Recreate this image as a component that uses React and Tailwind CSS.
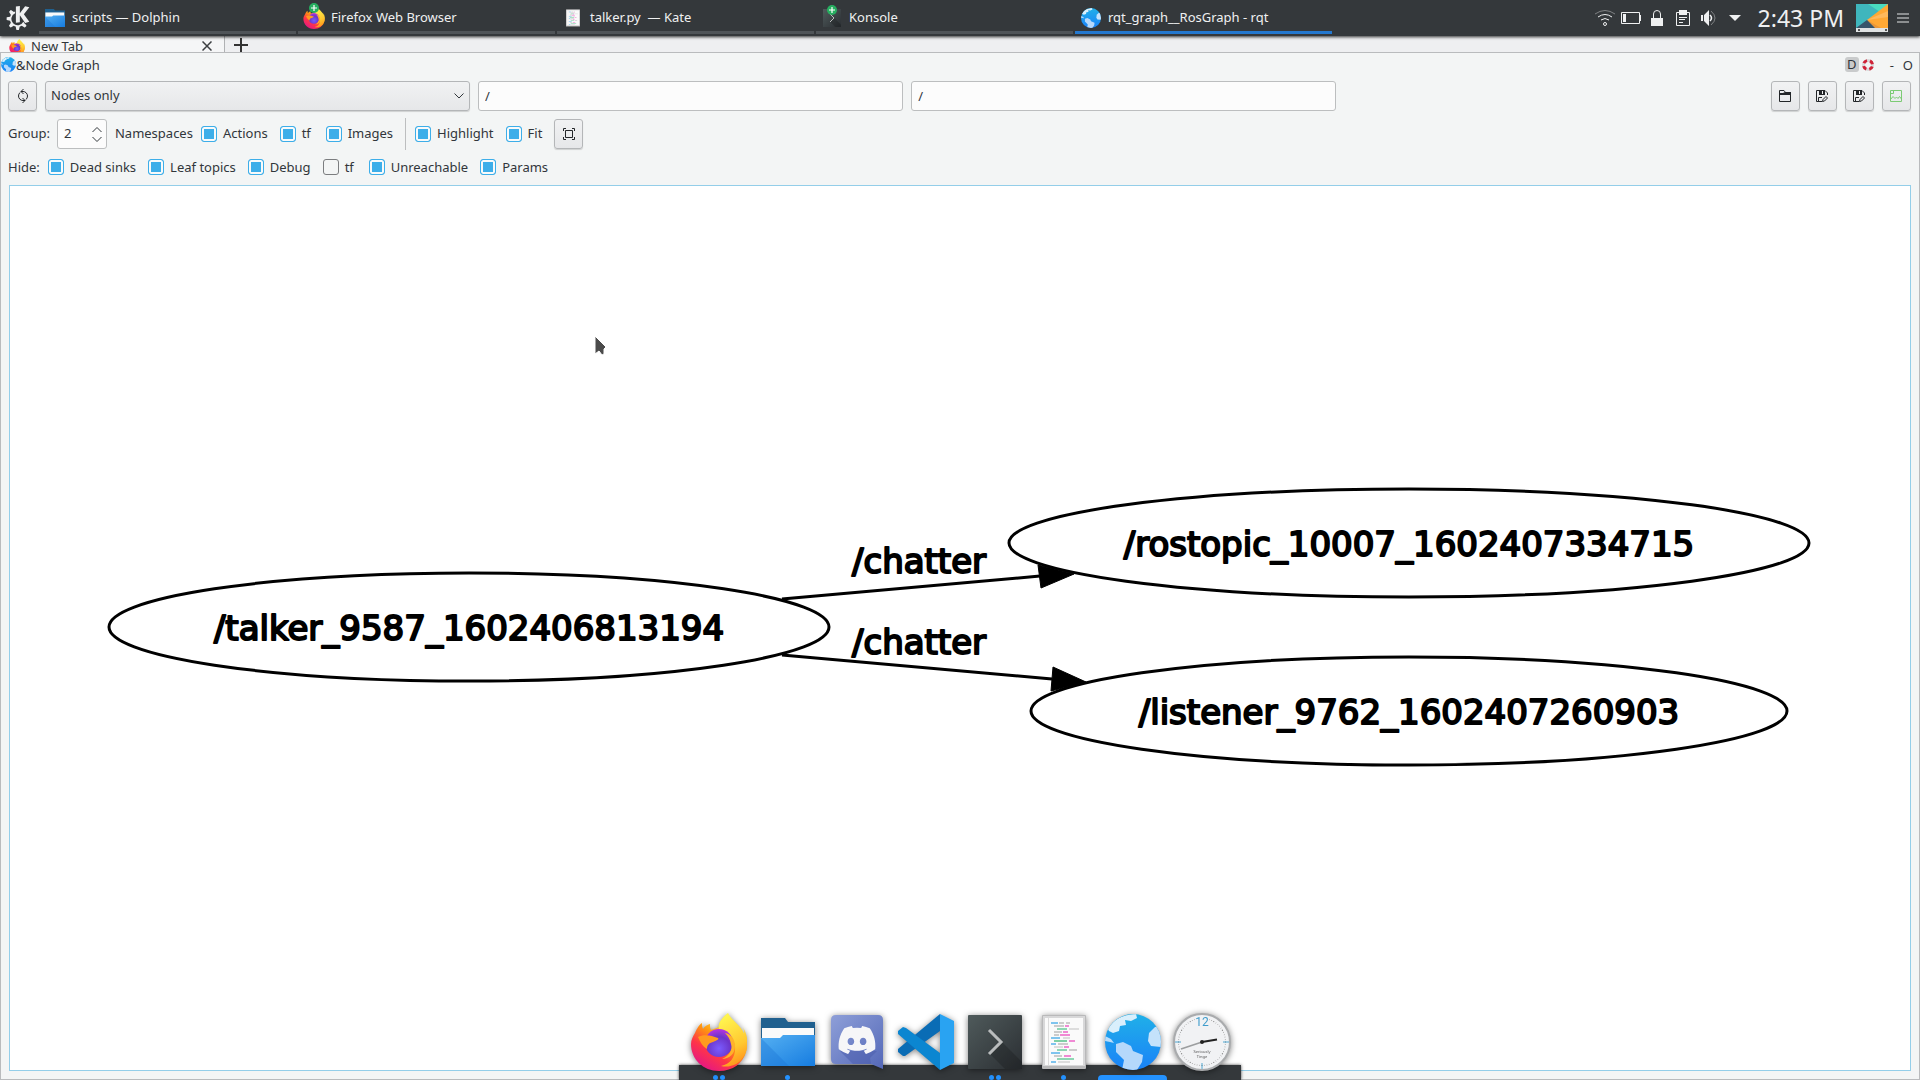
import React, { useId, useState } from "react";
import { SiKde } from "react-icons/si";
import { FaDiscord } from "react-icons/fa";

function Firefox({ className }) {
  const id = useId();
  return (
    <svg viewBox="0 0 56 58" className={className} aria-hidden="true">
      <defs>
        <linearGradient id={id + "a"} x1="0.85" y1="0.1" x2="0.2" y2="0.95">
          <stop offset="0" stopColor="#fff44f" />
          <stop offset="0.35" stopColor="#ff980e" />
          <stop offset="0.65" stopColor="#ff3647" />
          <stop offset="1" stopColor="#e31587" />
        </linearGradient>
        <linearGradient id={id + "b"} x1="0.5" y1="0" x2="0.8" y2="1">
          <stop offset="0" stopColor="#fff44f" />
          <stop offset="0.6" stopColor="#ffc830" />
          <stop offset="1" stopColor="#ff8a16" />
        </linearGradient>
        <radialGradient id={id + "c"} cx="0.5" cy="0.7" r="0.7">
          <stop offset="0" stopColor="#7a5cff" />
          <stop offset="0.6" stopColor="#6b35c9" />
          <stop offset="1" stopColor="#b833e1" />
        </radialGradient>
      </defs>
      <path fill={`url(#${id}a)`} d="M4 20C6 15 9 11 11 10C11 12 11 14 12 16C14 13 16 12 19 11C19 14 19 15 20 17L34 12C42 14 48 16 51 17C56 24 57 32 55 39C52 50 42 58 28 58C12 58 0 46 0 31C0 27 2 23 4 20Z" />
      <path fill={`url(#${id}b)`} d="M37 0C41 8 50 12 53 21C54 18 52 14 51 13C57 21 58 33 54 41C49 52 38 55 30 53C40 51 45 43 44 33C43 25 38 20 28 16C26 10 32 4 37 0Z" />
      <circle cx="28" cy="30" r="14" fill={`url(#${id}c)`} />
      <path fill="#ff9a1f" d="M7 24C12 21 20 22 27 25C28 26 27 27 22 29C18 30 16 32 16 36C11 33 9 28 7 24Z" />
      <path fill="#ffb22a" d="M34 20C40 21 44 26 44 33C44 41 38 46 31 46C38 43 42 37 40 31C39 26 37 23 34 20Z" />
    </svg>
  );
}

function Folder({ className, open }) {
  const id = useId();
  return (
    <svg viewBox="0 0 54 48" className={className} aria-hidden="true">
      <defs>
        <linearGradient id={id} x1="0" y1="0" x2="1" y2="1">
          <stop offset="0" stopColor="#55b0f2" />
          <stop offset="1" stopColor="#167ce0" />
        </linearGradient>
      </defs>
      <path fill="#20608f" d="M0 0H24L27 4H54V30H0Z" />
      <path fill="#fafafa" d={open ? "M1 9H52V24H1Z" : "M1 10H53V24H1Z"} />
      <path fill={`url(#${id})`} d="M0 20H19L22 17H54V48H0Z" />
      <path fill="#1b74d3" opacity="0.35" d="M0 20L28 48H0Z" />
    </svg>
  );
}

function Globe({ className }) {
  const id = useId();
  return (
    <svg viewBox="0 0 56 56" className={className} aria-hidden="true">
      <defs>
        <linearGradient id={id + "g"} x1="0" y1="0" x2="0" y2="1">
          <stop offset="0" stopColor="#20b0e8" />
          <stop offset="1" stopColor="#1a82f8" />
        </linearGradient>
        <clipPath id={id + "c"}>
          <circle cx="28" cy="28" r="28" />
        </clipPath>
      </defs>
      <g clipPath={`url(#${id}c)`}>
        <rect width="56" height="56" fill={`url(#${id}g)`} />
        <path fill="#d9effc" d="M3 15C8 6 16 1 31 0L32 4L26 7L20 6L21 11L15 12L14 17L8 19L4 17Z" />
        <path fill="#b9ddfb" d="M0 22L6 25L9 29L5 28L0 27Z" />
        <path fill="#b5d8fb" d="M11 30L18 28L26 32L28 37L38 41L37 48L32 56H17L19 46L11 38Z" />
        <path fill="#c4e2fb" d="M56 12L50 13L44 19L43 27L46 32L56 33Z" />
      </g>
    </svg>
  );
}

function Konsole({ className }) {
  const id = useId();
  return (
    <svg viewBox="0 0 54 54" className={className} aria-hidden="true">
      <defs>
        <linearGradient id={id} x1="0" y1="0" x2="1" y2="1">
          <stop offset="0" stopColor="#4f5a5b" />
          <stop offset="1" stopColor="#2b2f33" />
        </linearGradient>
      </defs>
      <rect width="54" height="54" rx="1" fill={`url(#${id})`} />
      <path fill="#000" opacity="0.18" d="M22 39L34 27L54 47V54H37Z" />
      <path fill="none" stroke="#b9bcbd" strokeWidth="3" d="M21 15L33 27L21 39" />
    </svg>
  );
}

const CODE = [
  [9, 8, 7, "#7fc4ee"], [17, 8, 5, "#ccc"], [24, 8, 4, "#ccc"], [12, 11, 10, "#ccc"], [23, 11, 4, "#f08ad4"],
  [15, 14, 10, "#8fd6b4"], [27, 14, 10, "#ddd"], [12, 17, 8, "#ccc"], [21, 17, 5, "#f08ad4"], [12, 20, 5, "#ccc"],
  [18, 20, 10, "#f08ad4"], [9, 23, 9, "#7fc4ee"], [21, 23, 7, "#ddd"], [12, 26, 13, "#7fd0a6"], [27, 26, 6, "#f08ad4"],
  [9, 29, 5, "#7fc4ee"], [16, 29, 10, "#ccc"], [12, 32, 9, "#ddd"], [22, 32, 5, "#f08ad4"], [15, 35, 10, "#8fd6b4"],
  [27, 35, 8, "#ccc"], [9, 38, 9, "#7fc4ee"], [12, 41, 8, "#ccc"], [22, 41, 7, "#f08ad4"], [15, 44, 17, "#8fd6b4"],
  [9, 47, 5, "#7fc4ee"], [16, 47, 12, "#ddd"],
];

function Kate({ className }) {
  return (
    <svg viewBox="0 0 44 54" className={className} aria-hidden="true">
      <rect width="44" height="54" rx="1" fill="#b9b9ba" />
      <rect x="1" y="1" width="42" height="50" fill="#d8d8d9" />
      <rect x="3" y="3" width="38" height="47" fill="#fafafa" />
      <path stroke="#dcdcdc" d="M6.5 3V50" />
      {CODE.map(([x, y, w, c], i) => (
        <rect key={i} x={x} y={y - 1} width={w} height="2" fill={c} />
      ))}
    </svg>
  );
}

function VSCode({ className }) {
  return (
    <svg viewBox="0 0 56 56" className={className} aria-hidden="true">
      <path fill="#0a6cb5" d="M42 0V17L7 42L5 42L0 38V35Z" />
      <path fill="#0b86d1" d="M5 13L8 14L42 39V56L0 20V17Z" />
      <path fill="#29a3f2" d="M42 0L56 7V49L42 56Z" />
    </svg>
  );
}

function Discord({ className }) {
  const id = useId();
  return (
    <div className={className}>
      <svg viewBox="0 0 52 54" className="h-full w-full" aria-hidden="true">
        <defs>
          <linearGradient id={id} x1="0" y1="0" x2="1" y2="1">
            <stop offset="0" stopColor="#8e9fd8" />
            <stop offset="1" stopColor="#5468b8" />
          </linearGradient>
        </defs>
        <path fill={`url(#${id})`} d="M5 0H47Q52 0 52 5V54L40 49H5Q0 49 0 44V5Q0 0 5 0Z" />
        <path fill="#4a5cab" opacity="0.5" d="M9 36L22 49H40L39 43L46 36Z" />
        <FaDiscord x="6" y="5" size="40" color="#f6f6f8" />
      </svg>
    </div>
  );
}

function Clock({ className }) {
  const ticks = Array.from({ length: 60 }, (_, i) => i);
  return (
    <svg viewBox="0 0 58 58" className={className} aria-hidden="true">
      <circle cx="29" cy="29" r="28" fill="#f1f2f4" stroke="#a9abad" strokeWidth="2" />
      {ticks.map((i) => (
        <path key={i} stroke="#777" strokeWidth={i % 5 ? 0.5 : 1} d="M29 5V6" transform={`rotate(${i * 6} 29 29)`} />
      ))}
      <rect x="22" y="3" width="14" height="10" fill="#f1f2f4" />
      <text x="29" y="13" textAnchor="middle" fontSize="12" fill="#3f9ccc" fontFamily="Roboto, sans-serif">12</text>
      <path stroke="#4fa6d0" strokeWidth="1" d="M2 29H8M50 29H56M29 50V56" />
      <text x="29" y="40" textAnchor="middle" fontSize="4" fill="#555" fontFamily="Noto Sans, sans-serif">Seriously</text>
      <text x="29" y="45" textAnchor="middle" fontSize="4" fill="#555" fontFamily="Noto Sans, sans-serif">Tinge</text>
      <path stroke="#9c9ea0" strokeWidth="1.5" d="M29 29L8 36" />
      <path stroke="#222" strokeWidth="2" d="M29 29L44 26.500" />
      <circle cx="29" cy="29" r="2" fill="#222" />
    </svg>
  );
}

function PlusBadge() {
  return (
    <svg viewBox="0 0 10 10" className="absolute left-1/2 -top-1 h-[10px] w-[10px] -translate-x-1/2" aria-hidden="true">
      <circle cx="5" cy="5" r="5" fill="#27ae60" />
      <path stroke="#fff" strokeWidth="1.200" d="M5 2V8M2 5H8" />
    </svg>
  );
}

const TASKS = [
  { title: "scripts — Dolphin", icon: <Folder open className="h-[18px] w-[20px]" /> },
  { title: "Firefox Web Browser", icon: <Firefox className="h-[22px] w-[22px]" />, badge: true },
  { title: "talker.py  — Kate", icon: <Kate className="h-[18px] w-[14px]" /> },
  { title: "Konsole", icon: <Konsole className="h-[18px] w-[18px]" />, badge: true },
  { title: "rqt_graph__RosGraph - rqt", icon: <Globe className="h-5 w-5" />, active: true },
];

function Tray() {
  return (
    <div className="flex items-center gap-1 text-[#eff0f1]">
      <svg viewBox="0 0 22 22" className="h-[22px] w-[22px]" fill="none" stroke="currentColor" aria-label="Network">
        <circle cx="11" cy="17" r="1.500" />
        <path d="M7 13Q11 10 15 13" />
        <path d="M4 10Q11 5 18 10" />
        <path opacity="0.4" d="M1 7Q11 0 21 7" />
      </svg>
      <svg viewBox="0 0 22 22" className="h-[22px] w-[22px]" fill="none" stroke="currentColor" aria-label="Battery">
        <path d="M1.500 5.500H19.500V16.500H1.500Z" />
        <path d="M20.500 8V14" />
        <path fill="currentColor" stroke="none" d="M3 7H6V15H3Z" />
      </svg>
      <svg viewBox="0 0 22 22" className="h-[22px] w-[22px]" fill="none" stroke="currentColor" aria-label="Lock">
        <path d="M7.500 11V7Q7.500 3.500 11 3.500T14.500 7V11" />
        <path fill="currentColor" stroke="none" d="M5 11H17V19H5Z" />
      </svg>
      <svg viewBox="0 0 22 22" className="h-[22px] w-[22px]" fill="none" stroke="currentColor" aria-label="Clipboard">
        <path d="M4.500 5.500H17.500V18.500H4.500Z" />
        <path fill="currentColor" stroke="none" d="M7 3H15V8H7Z" />
        <path d="M7 10.500H15M7 12.500H13M7 15.500H11" />
      </svg>
      <svg viewBox="0 0 22 22" className="h-[22px] w-[22px]" fill="none" stroke="currentColor" aria-label="Volume">
        <path fill="currentColor" stroke="none" d="M3 8H5V14H3ZM6 8L11 3V19L6 14Z" />
        <path d="M12 8Q15 11 12 14" strokeWidth="1.500" />
        <path opacity="0.4" d="M13 4Q21 11 13 18" />
      </svg>
      <svg viewBox="0 0 22 22" className="h-[22px] w-[22px]" fill="currentColor" aria-label="More">
        <path d="M5 8H17L11 14Z" />
      </svg>
    </div>
  );
}

function Panel() {
  return (
    <header className="relative z-10 flex h-9 shrink-0 items-stretch bg-[#34383b] text-[13px] text-[#eff0f1] shadow-[0_1px_3px_rgba(0,0,0,0.8)]">
      <button className="flex w-[39px] items-center pl-1.5" aria-label="Application launcher">
        <SiKde className="h-[24px] w-[24px]" />
      </button>
      <nav className="flex min-w-0 flex-1 gap-0.5">
        {TASKS.map((t) => (
          <button
            key={t.title}
            className={
              "mb-0.5 flex w-[257px] items-center border-b-[3px] pt-1 pl-1 text-left whitespace-pre " +
              (t.active ? "border-[#2478cf]" : "border-[#4f5458]")
            }
          >
            <span className="relative flex w-6 justify-center">
              {t.icon}
              {t.badge && <PlusBadge />}
            </span>
            <span className="pl-[5px]">{t.title}</span>
          </button>
        ))}
      </nav>
      <Tray />
      <time className="flex items-center px-3 text-[23px] leading-none">2:43 PM</time>
      <button className="self-center" aria-label="Show desktop">
        <svg viewBox="0 0 32 28" className="h-7 w-8">
          <rect width="32" height="28" fill="#3fb6bd" />
          <path fill="#49dcc0" d="M12 0H32L24 8Z" />
          <path fill="#ffa834" d="M32 0V28H22L11 16Z" />
          <path fill="#e8963a" d="M11 16L22 28H32Z" />
          <path fill="#ffb95c" d="M11 16L32 7V13Z" />
          <path fill="#37556b" d="M0 24L11 16L19 24Z" />
          <rect y="24" width="32" height="4" fill="#dfe2e3" />
          <path fill="#555" d="M2 25H4V27H2ZM29 25H31V27H29Z" />
        </svg>
      </button>
      <button className="flex items-center pr-[11px] pl-[9px]" aria-label="Panel menu">
        <svg viewBox="0 0 12 10" className="h-[10px] w-3">
          <path fill="#8b8e90" d="M0 0H12V2H0ZM0 4H12V6H0ZM0 8H12V10H0Z" />
        </svg>
      </button>
    </header>
  );
}

function BrowserTabs() {
  return (
    <div className="flex h-4 shrink-0 items-start bg-[#eeeff1] text-[13px] leading-[18px]">
      <div className="flex h-4 w-[225px] items-start border-r border-[#b0b2b4] bg-[#f5f6f7] pt-px pl-[9px]">
        <span className="h-[15px] overflow-hidden pt-0.5">
          <Firefox className="h-4 w-4" />
        </span>
        <span className="flex-1 pl-1.5">New Tab</span>
        <button className="mt-1 mr-3" aria-label="Close tab">
          <svg viewBox="0 0 10 10" className="h-[10px] w-[10px]" stroke="#3c3f42" strokeWidth="1.500">
            <path d="M0.500 0.500L9.500 9.500M9.500 0.500L0.500 9.500" />
          </svg>
        </button>
      </div>
      <button className="mt-0.5 ml-[9px]" aria-label="New tab">
        <svg viewBox="0 0 14 14" className="h-[14px] w-[14px]" stroke="#333" strokeWidth="2">
          <path d="M7 0V14M0 7H14" />
        </svg>
      </button>
    </div>
  );
}

const BTN =
  "flex h-[30px] w-[29px] shrink-0 items-center justify-center rounded-[3px] border border-[#b4b6b8] bg-linear-to-b from-[#f1f2f3] to-[#e6e7e9] shadow-[0_1px_1px_rgba(0,0,0,0.15)]";

function ToolButton({ label, children }) {
  return (
    <button className={BTN} aria-label={label}>
      <svg viewBox="0 0 16 16" className="h-4 w-4" fill="none" stroke="#232629" aria-hidden="true">
        {children}
      </svg>
    </button>
  );
}

function SaveGlyph() {
  return (
    <>
      <path d="M8 13.500H2.500V2.500H11L13.500 5V7" />
      <path fill="#232629" stroke="none" d="M5 2H11V7H5Z" />
      <path fill="#f1f2f3" stroke="none" d="M8 3H9V6H8Z" />
      <path d="M4.500 13V9.500H8" />
      <path d="M8.500 13.500L9 11.500L12 8.500L13.500 10L10.500 13Z" />
    </>
  );
}

function Check({ label, on = true }) {
  const [checked, setChecked] = useState(on);
  return (
    <label className="flex items-center gap-1.5 whitespace-nowrap">
      <input
        type="checkbox"
        checked={checked}
        onChange={(e) => setChecked(e.target.checked)}
        className="h-4 w-4 shrink-0 appearance-none rounded-[3px] border border-[#7b7d7f] bg-[#f3f5f5] checked:border-[#3daee9] checked:bg-[#3daee9] checked:shadow-[inset_0_0_0_2px_#f9fafa]"
      />
      <span className="min-w-3">{label}</span>
    </label>
  );
}

function FilterInput({ label }) {
  return (
    <div className="flex min-w-0 flex-1">
      <input aria-label={label} defaultValue="/" className="h-[30px] w-full rounded-[3px] border border-[#bcbebf] bg-[#fcfcfc] px-1.5" />
    </div>
  );
}

function Toolbar() {
  const [group, setGroup] = useState(2);
  return (
    <div className="pr-2 pl-[7px] text-[13px]">
      <div className="flex items-center gap-2">
        <ToolButton label="Refresh ROS graph">
          <path d="M6 3.500H8A4.500 4.500 0 0 1 12.500 8Q12.500 10 11 11.500M10 12.500H8A4.500 4.500 0 0 1 3.500 8Q3.500 6 5 4.500M8.500 1L6 3.500L8.500 6M7.500 10L10 12.500L7.500 15" />
        </ToolButton>
        <div className="relative flex min-w-0 flex-1">
          <select
            aria-label="Graph type"
            className="h-[30px] w-full appearance-none rounded-[3px] border border-[#b4b6b8] bg-linear-to-b from-[#f1f2f3] to-[#e6e7e9] pl-[5px] shadow-[0_1px_1px_rgba(0,0,0,0.15)]"
          >
            <option>Nodes only</option>
            <option>Nodes/Topics (active)</option>
            <option>Nodes/Topics (all)</option>
          </select>
          <svg viewBox="0 0 10 6" className="pointer-events-none absolute top-3 right-1.5 h-1.5 w-[10px]" fill="none" stroke="#31363b">
            <path d="M0.500 0.500L5 5L9.500 0.500" />
          </svg>
        </div>
        <FilterInput label="Namespace filter" />
        <FilterInput label="Topic filter" />
        <div className="w-[22%]" />
        <ToolButton label="Load dot file">
          <path d="M2.500 13.500V2.500H7L8.500 4.500H13.500V13.500Z" />
          <path fill="#232629" stroke="none" d="M2 5H6L8 4H14V7H2Z" />
        </ToolButton>
        <ToolButton label="Save as dot graph"><SaveGlyph /></ToolButton>
        <ToolButton label="Save as SVG"><SaveGlyph /></ToolButton>
        <ToolButton label="Save as image">
          <g stroke="#7ccb74">
            <path d="M2.500 2.500H13.500V13.500H2.500Z" />
            <path d="M2.500 11.500L5 8.500L7 10.500L8.500 9L10 10.500L11.500 8.500L13.500 11" />
            <path d="M2.500 5.500H5.500V2.500" />
          </g>
        </ToolButton>
      </div>

      <div className="flex items-center gap-3 pt-[7px]">
        <div className="flex items-center gap-[7px]">
          <label htmlFor="group">Group:</label>
          <div className="flex h-[30px] w-[50px] items-center rounded-[3px] border border-[#bcbebf] bg-[#fcfcfc] pr-1 pl-1.5">
            <input id="group" inputMode="numeric" value={group} onChange={(e) => setGroup(Number(e.target.value) || 0)} className="w-0 min-w-0 flex-1 bg-transparent" />
            <div className="flex flex-col gap-[5px]">
              <button aria-label="Increase" onClick={() => setGroup(group + 1)}>
                <svg viewBox="0 0 10 5" className="h-[5px] w-[10px]" fill="none" stroke="#31363b"><path d="M0.500 5L5 0.500L9.500 5" /></svg>
              </button>
              <button aria-label="Decrease" onClick={() => setGroup(group - 1)}>
                <svg viewBox="0 0 10 5" className="h-[5px] w-[10px]" fill="none" stroke="#31363b"><path d="M0.500 0L5 4.500L9.500 0" /></svg>
              </button>
            </div>
          </div>
          <div className="flex items-center gap-2 pl-px">
            <span>Namespaces</span>
            <Check label="Actions" />
          </div>
        </div>
        <Check label="tf" />
        <Check label="Images" />
        <div className="flex items-center gap-[9px]">
          <div className="h-8 w-px bg-[#bcbebf]" />
          <Check label="Highlight" />
        </div>
        <Check label="Fit" />
        <ToolButton label="Fit in view">
          <path d="M4.500 4.500H11.500V11.500H4.500ZM2.500 5V2.500H5M11 2.500H13.500V5M13.500 11V13.500H11M5 13.500H2.500V11" />
        </ToolButton>
      </div>

      <div className="flex items-center gap-3 pt-[7px] pb-2 leading-5">
        <div className="flex items-center gap-2">
          <span>Hide:</span>
          <Check label="Dead sinks" />
        </div>
        <Check label="Leaf topics" />
        <Check label="Debug" />
        <Check label="tf" on={false} />
        <Check label="Unreachable" />
        <Check label="Params" />
      </div>
    </div>
  );
}

const NODES = [
  { cx: 469, cy: 627, rx: 360, name: "/talker_9587_1602406813194" },
  { cx: 1409, cy: 543, rx: 400, name: "/rostopic_10007_1602407334715" },
  { cx: 1409, cy: 711, rx: 378, name: "/listener_9762_1602407260903" },
];

function Graph() {
  return (
    <svg viewBox="10 186 1900 884" className="block h-full w-full" role="img" aria-label="ROS node graph">
      <g fill="none" stroke="#000" strokeWidth="3">
        {NODES.map((n) => (
          <ellipse key={n.name} cx={n.cx} cy={n.cy} rx={n.rx} ry="54" />
        ))}
        <path d="M782 599L1040 576M782 655L1052 679" />
      </g>
      <path stroke="#000" d="M1038 565L1041 588L1074 574ZM1053 667L1051 691L1086 682Z" />
      <g fontFamily="DejaVu Sans, sans-serif" fontSize="34" fill="#000" stroke="#000" strokeWidth="2" strokeLinejoin="round">
        {NODES.map((n) => (
          <text key={n.name} x={n.cx} y={n.cy + 13} textAnchor="middle">{n.name}</text>
        ))}
        <text x="852" y="573">/chatter</text>
        <text x="852" y="654">/chatter</text>
      </g>
      <path fill="#4b4b4b" stroke="#fff" d="M595 336V354L599 351L602 355L604 354V349L606 347Z" />
    </svg>
  );
}

const DOCK = [
  { name: "Firefox", icon: <Firefox className="h-[58px] w-[56px]" />, dots: 2 },
  { name: "Dolphin", icon: <Folder className="h-[48px] w-[54px]" />, dots: 1 },
  { name: "Discord", icon: <Discord className="h-[54px] w-[52px]" />, dots: 0 },
  { name: "Visual Studio Code", icon: <VSCode className="h-[56px] w-[56px]" />, dots: 0 },
  { name: "Konsole", icon: <Konsole className="h-[54px] w-[54px]" />, dots: 2 },
  { name: "Kate", icon: <Kate className="h-[54px] w-[44px]" />, dots: 1 },
  { name: "rqt", icon: <Globe className="h-[56px] w-[56px]" />, active: true },
  { name: "Clock", icon: <Clock className="h-[58px] w-[58px]" />, dots: 0 },
];

function Dock() {
  return (
    <div className="absolute bottom-0 left-1/2 flex -translate-x-1/2 px-[5px]">
      <div className="absolute inset-x-0 bottom-0 h-[15px] bg-[#34383b] shadow-[0_0_3px_rgba(0,0,0,0.7)]" />
      {DOCK.map((d) => (
        <button key={d.name} aria-label={d.name} className="relative flex h-[70px] w-[69px] flex-col items-center">
          <span className="flex h-16 items-center drop-shadow-[0_1px_3px_rgba(0,0,0,0.5)]">{d.icon}</span>
          <span className="mt-auto flex gap-0.5">
            {d.active && <i className="h-[5px] w-[69px] rounded-t-sm bg-[#2492ff]" />}
            {Array.from({ length: d.dots || 0 }, (_, i) => (
              <i key={i} className="h-[5px] w-[5px] rounded-full bg-[#2492ff]" />
            ))}
          </span>
        </button>
      ))}
    </div>
  );
}

export default function App() {
  return (
    <div className="relative flex h-screen flex-col overflow-hidden bg-[#f3f5f5] font-['Noto_Sans',sans-serif] text-[#31363b]">
      <Panel />
      <BrowserTabs />
      <main className="flex min-h-0 flex-1 flex-col border border-[#b9bbbd]">
        <div className="flex h-7 shrink-0 items-start pr-1.5 text-[13px] leading-[24px]">
          <Globe className="mt-1 h-[15px] w-[15px]" />
          <h1 className="flex-1">&amp;Node Graph</h1>
          <button className="mt-1 w-[14px] rounded-[3px] bg-[#c9cbcc] text-center leading-[15px]">D</button>
          <button aria-label="Help" className="mt-1.5 mr-4 ml-[3px]">
            <svg viewBox="0 0 12 12" className="h-3 w-3">
              <circle cx="6" cy="6" r="4.500" fill="none" stroke="#d9dbdc" strokeWidth="3" />
              <circle cx="6" cy="6" r="4.500" fill="none" stroke="#cf2338" strokeWidth="3" strokeDasharray="4 3.068" strokeDashoffset="-1.534" />
            </svg>
          </button>
          <button className="mr-[9px]">-</button>
          <button>O</button>
        </div>
        <Toolbar />
        <section className="mx-2 mb-2 min-h-0 flex-1 border border-[#93cee9] bg-white">
          <Graph />
        </section>
      </main>
      <Dock />
    </div>
  );
}
